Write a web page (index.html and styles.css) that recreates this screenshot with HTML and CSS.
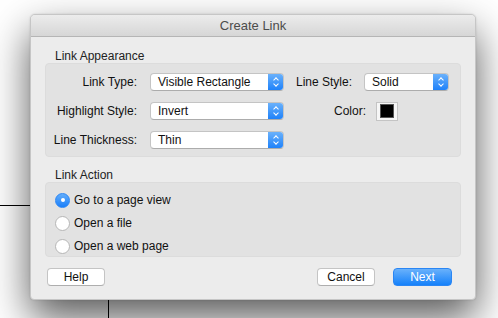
FILE: index.html
```html
<!DOCTYPE html>
<html lang="en">
<head>
    <meta charset="UTF-8">
    <title>Create Link</title>
    <link rel="stylesheet" href="styles.css">
</head>
<body>
    <div class="line-h"></div>
    <div class="line-v"></div>

    <div class="dialog">
        <div class="titlebar">Create Link</div>

        <div class="content">
            <div class="group-label">Link Appearance</div>
            <div class="group appearance">
                <div class="row">
                    <span class="label">Link Type:</span>
                    <div class="popup wide"><span>Visible Rectangle</span><i class="arrows"></i></div>
                    <span class="label2">Line Style:</span>
                    <div class="popup small"><span>Solid</span><i class="arrows"></i></div>
                </div>
                <div class="row">
                    <span class="label">Highlight Style:</span>
                    <div class="popup wide"><span>Invert</span><i class="arrows"></i></div>
                    <span class="label3">Color:</span>
                    <div class="swatch"><div class="swatch-fill"></div></div>
                </div>
                <div class="row">
                    <span class="label">Line Thickness:</span>
                    <div class="popup wide"><span>Thin</span><i class="arrows"></i></div>
                </div>
            </div>

            <div class="group-label second">Link Action</div>
            <div class="group action">
                <label class="radio-row"><span class="radio checked"></span>Go to a page view</label>
                <label class="radio-row"><span class="radio"></span>Open a file</label>
                <label class="radio-row"><span class="radio"></span>Open a web page</label>
            </div>
        </div>

        <div class="buttons">
            <button class="btn">Help</button>
            <div class="spacer"></div>
            <button class="btn">Cancel</button>
            <button class="btn primary">Next</button>
        </div>
    </div>
</body>
</html>
```

FILE: styles.css
```css
body {
    margin: 0;
    width: 498px;
    height: 318px;
    overflow: hidden;
    background: #ffffff;
    font-family: "Liberation Sans", Arial, sans-serif;
    font-size: 12px;
    color: #111;
    position: relative;
}

/* page lines behind the dialog */
.line-h {
    position: absolute;
    left: 0;
    top: 205px;
    width: 40px;
    height: 1px;
    background: #000;
}
.line-v {
    position: absolute;
    left: 108px;
    top: 290px;
    width: 1px;
    height: 30px;
    background: #000;
}

.dialog {
    position: absolute;
    left: 30px;
    top: 14px;
    width: 444px;
    height: 284px;
    background: #ececec;
    border: 1px solid #c6c6c6;
    border-radius: 5px 5px 4px 4px;
    box-shadow: 0 18px 40px rgba(0, 0, 0, 0.65), 0 0 2px rgba(0, 0, 0, 0.15);
    overflow: hidden;
}

.titlebar {
    height: 21px;
    line-height: 21px;
    text-align: center;
    font-size: 13px;
    color: #4c4c4c;
    background: linear-gradient(#ececec, #d6d6d6);
    border-bottom: 1px solid #b5b5b5;
}

.content {
    padding: 12px 14px 0 14px;
}

.group-label {
    height: 14px;
    line-height: 14px;
    padding-left: 10px;
    color: #222;
}
.group-label.second {
    margin-top: 11px;
}

.group {
    background: #e2e2e2;
    border: 1px solid #dcdcdc;
    border-radius: 4px;
    box-sizing: border-box;
}

.appearance {
    height: 94px;
    padding-top: 9px;
    display: flex;
    flex-direction: column;
    gap: 11px;
}

.row {
    display: flex;
    align-items: center;
    height: 18px;
    white-space: nowrap;
}
.row > * {
    flex-shrink: 0;
}

.label {
    width: 91px;
    text-align: right;
    margin-right: 13px;
}
.label2 {
    margin-left: 12px;
    width: 54px;
    margin-right: 14px;
}
.label3 {
    width: 70px;
    text-align: right;
    margin-right: 10px;
    margin-left: 12px;
}

.popup {
    height: 18px;
    box-sizing: border-box;
    background: #fff;
    border: 1px solid #c4c4c4;
    border-bottom-color: #acacac;
    border-radius: 4px;
    display: flex;
    align-items: center;
    position: relative;
    overflow: hidden;
}
.popup span {
    flex: 1;
    padding-left: 7px;
}
.popup.wide {
    width: 134px;
}
.popup.small {
    width: 85px;
}
.arrows {
    width: 16px;
    height: 18px;
    margin-right: -1px;
    background: linear-gradient(#6fb4fb, #1a7ffa);
    position: relative;
}
.arrows::before,
.arrows::after {
    content: "";
    position: absolute;
    left: 6px;
    width: 3px;
    height: 3px;
    border-left: 1.2px solid #fff;
    border-top: 1.2px solid #fff;
}
.arrows::before {
    top: 5px;
    transform: rotate(45deg);
}
.arrows::after {
    top: 9px;
    transform: rotate(225deg);
}

.swatch {
    width: 22px;
    height: 19px;
    box-sizing: border-box;
    background: #f6f6f6;
    border: 1px solid #c4c4c4;
    display: flex;
    align-items: center;
    justify-content: center;
}
.swatch-fill {
    width: 12px;
    height: 12px;
    background: #000;
    border: 1px solid #555;
}

.action {
    height: 75px;
    padding-top: 8px;
    display: flex;
    flex-direction: column;
    gap: 5px;
}

.radio-row {
    display: flex;
    align-items: center;
    height: 18px;
    padding-left: 9px;
}
.radio {
    width: 15px;
    height: 15px;
    box-sizing: border-box;
    border-radius: 50%;
    background: #fff;
    border: 1px solid #b6b6b6;
    margin-right: 4px;
    position: relative;
}
.radio.checked {
    background: linear-gradient(#62adfb, #1a7ffa);
    border-color: #2b86f5;
}
.radio.checked::after {
    content: "";
    position: absolute;
    left: 4.5px;
    top: 4.5px;
    width: 4px;
    height: 4px;
    border-radius: 50%;
    background: #fff;
}

.buttons {
    display: flex;
    align-items: center;
    padding: 11px 23px 0 16px;
}
.spacer {
    flex: 1;
}
.btn {
    width: 58px;
    height: 18px;
    padding: 0;
    font-family: "Liberation Sans", Arial, sans-serif;
    font-size: 12px;
    color: #111;
    background: #fff;
    border: 1px solid #c4c4c4;
    border-bottom-color: #aeaeae;
    border-radius: 4px;
}
.btn.primary {
    width: 59px;
    margin-left: 18px;
    color: #fff;
    background: linear-gradient(#69b1fb, #1581fa);
    border-color: #2a86f4;
}
```
